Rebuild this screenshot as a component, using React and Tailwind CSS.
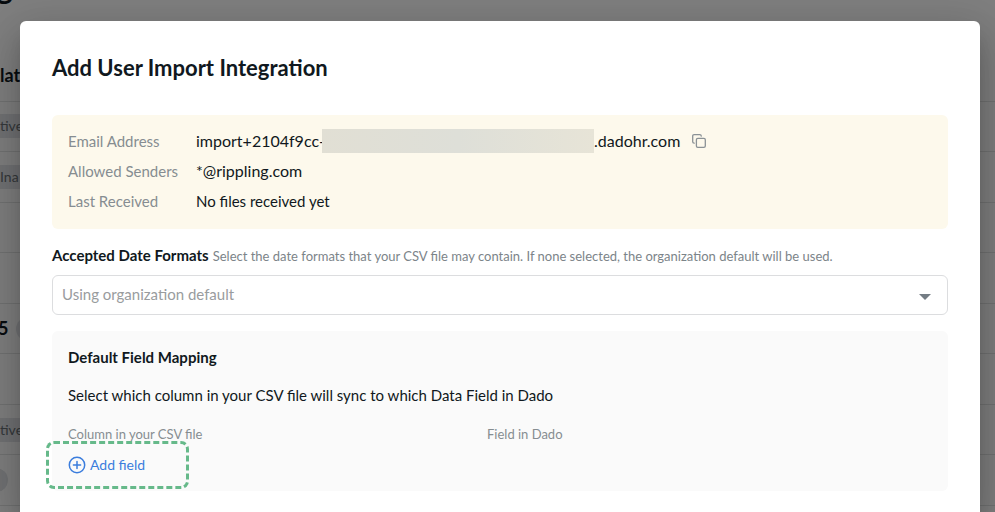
const rows = [
  { id: 1, title: 'lat' },
  { id: 2, tag: 'tive' },
  { id: 3, tag: 'Ina' },
  { id: 4 },
  { id: 5 },
  { id: 6, title: '5', dot: true },
  { id: 7 },
  { id: 8, tag: 'tive' },
  { id: 9, dot: true },
];

function BackgroundPage() {
  return (
    <div className="absolute inset-0 overflow-hidden bg-white" aria-hidden="true">
      <div className="flex h-[51px] items-start">
        <span className="-mt-[29px] -ml-1 text-[32px] leading-8 font-bold">g</span>
      </div>
      <div className="grid h-[455px] auto-rows-fr">
        {rows.map((row) => (
          <div key={row.id} className="flex items-center border-b border-[#e2e4e5]">
            {row.title && (
              <span className={row.dot ? '-ml-0.5 text-[18px] font-bold' : 'text-[18px] font-bold'}>{row.title}</span>
            )}
            {row.tag && (
              <span className="flex h-6 w-14 items-center bg-[#e2e5e8] text-sm text-[#6b7277]">{row.tag}</span>
            )}
            {row.dot && (
              <span className={row.title ? 'ml-2 size-6 rounded-full bg-[#e2e5e8]' : '-ml-4 size-6 rounded-full bg-[#e2e5e8]'} />
            )}
          </div>
        ))}
      </div>
    </div>
  );
}

function CopyIcon() {
  return (
    <svg viewBox="0 0 14 14" className="size-3.5" fill="none" stroke="#8b9296" strokeWidth="1.3" strokeLinecap="round">
      <rect x="4.4" y="4.4" width="8.9" height="8.9" rx="1.4" />
      <path d="M2.2 9.2C1.2 9.1 .7 8.6 .7 7.8V2.1C.7 1.2 1.2 .7 2.1 .7H7.8C8.7 .7 9.2 1.2 9.3 2.1" />
    </svg>
  );
}

function AddIcon() {
  return (
    <svg viewBox="0 0 18 18" className="size-[18px]" fill="none" stroke="currentColor" strokeWidth="1.5" strokeLinecap="round">
      <circle cx="9" cy="9" r="7.7" />
      <path d="M9 5.4v7.2M5.4 9h7.2" />
    </svg>
  );
}

export default function App() {
  return (
    <div className="relative min-h-screen overflow-hidden font-['Lato','Noto_Sans',sans-serif] text-[#101820]">
      <BackgroundPage />
      <div className="relative flex min-h-screen bg-black/50 pt-[21px] pr-[15px] pl-5">
        <main
          role="dialog"
          aria-labelledby="dialog-title"
          className="grow rounded-t-md bg-white px-8 pt-8 pb-5 shadow-[0_11px_15px_-7px_rgba(0,0,0,0.2),0_24px_38px_3px_rgba(0,0,0,0.14),0_9px_46px_8px_rgba(0,0,0,0.12)]"
        >
          <h1 id="dialog-title" className="text-[22px] leading-[30px] font-bold">
            Add User Import Integration
          </h1>

          <dl className="mt-8 grid grid-cols-[128px_1fr] auto-rows-[30px] items-center rounded-md bg-[#fdf9ec] px-4 pt-[11px] pb-[13px] text-[15px]">
            <dt className="text-[#868d91]">Email Address</dt>
            <dd className="flex items-center">
              <span className="w-[126px] text-base whitespace-nowrap">import+2104f9cc-</span>
              <span className="h-6 w-[272px] bg-linear-to-r from-[#e1dfd4] via-[#dedfd8] to-[#e7e4d7]" />
              <span className="text-base">.dadohr.com</span>
              <button type="button" aria-label="Copy email address" className="ml-3">
                <CopyIcon />
              </button>
            </dd>
            <dt className="text-[#868d91]">Allowed Senders</dt>
            <dd className="text-base">*@rippling.com</dd>
            <dt className="text-[#868d91]">Last Received</dt>
            <dd>No files received yet</dd>
          </dl>

          <div className="mt-4 flex h-[22px] items-baseline gap-1 leading-5">
            <label htmlFor="date-formats" className="text-[15px] font-bold">
              Accepted Date Formats
            </label>
            <span className="text-[13px] text-[#7c8489]">
              Select the date formats that your CSV file may contain. If none selected, the organization default will be used.
            </span>
          </div>
          <div className="relative mt-2">
            <select
              id="date-formats"
              className="block h-10 w-full appearance-none rounded-md border border-[#dcdddf] bg-white px-[9px] pb-0.5 text-[15px] text-[#999c9e]"
            >
              <option>Using organization default</option>
            </select>
            <svg viewBox="0 0 12 6" className="pointer-events-none absolute top-[19px] right-[17px] h-1.5 w-3" fill="#747d84">
              <path d="M0 0h12L6 6z" />
            </svg>
          </div>

          <section className="mt-4 rounded-md bg-[#fafafa] px-4 py-[15px]">
            <h2 className="text-[15px] leading-[22px] font-bold">Default Field Mapping</h2>
            <p className="mt-4 text-[15px] leading-[22px]">
              Select which column in your CSV file will sync to which Data Field in Dado
            </p>
            <div className="mt-[17px] grid grid-cols-[1fr_1fr_26px] text-[13px] leading-[22px] text-[#868d91]">
              <span>Column in your CSV file</span>
              <span>Field in Dado</span>
            </div>
            <div className="relative mt-[9px] flex">
              <button type="button" className="flex h-[22px] items-center gap-1 text-sm text-[#3b7ddd]">
                <AddIcon />
                Add field
              </button>
              <div className="pointer-events-none absolute -top-[13px] -left-[22px] h-12 w-[143px] rounded-lg border-3 border-dashed border-[#66b98a]" />
            </div>
          </section>
        </main>
      </div>
    </div>
  );
}
